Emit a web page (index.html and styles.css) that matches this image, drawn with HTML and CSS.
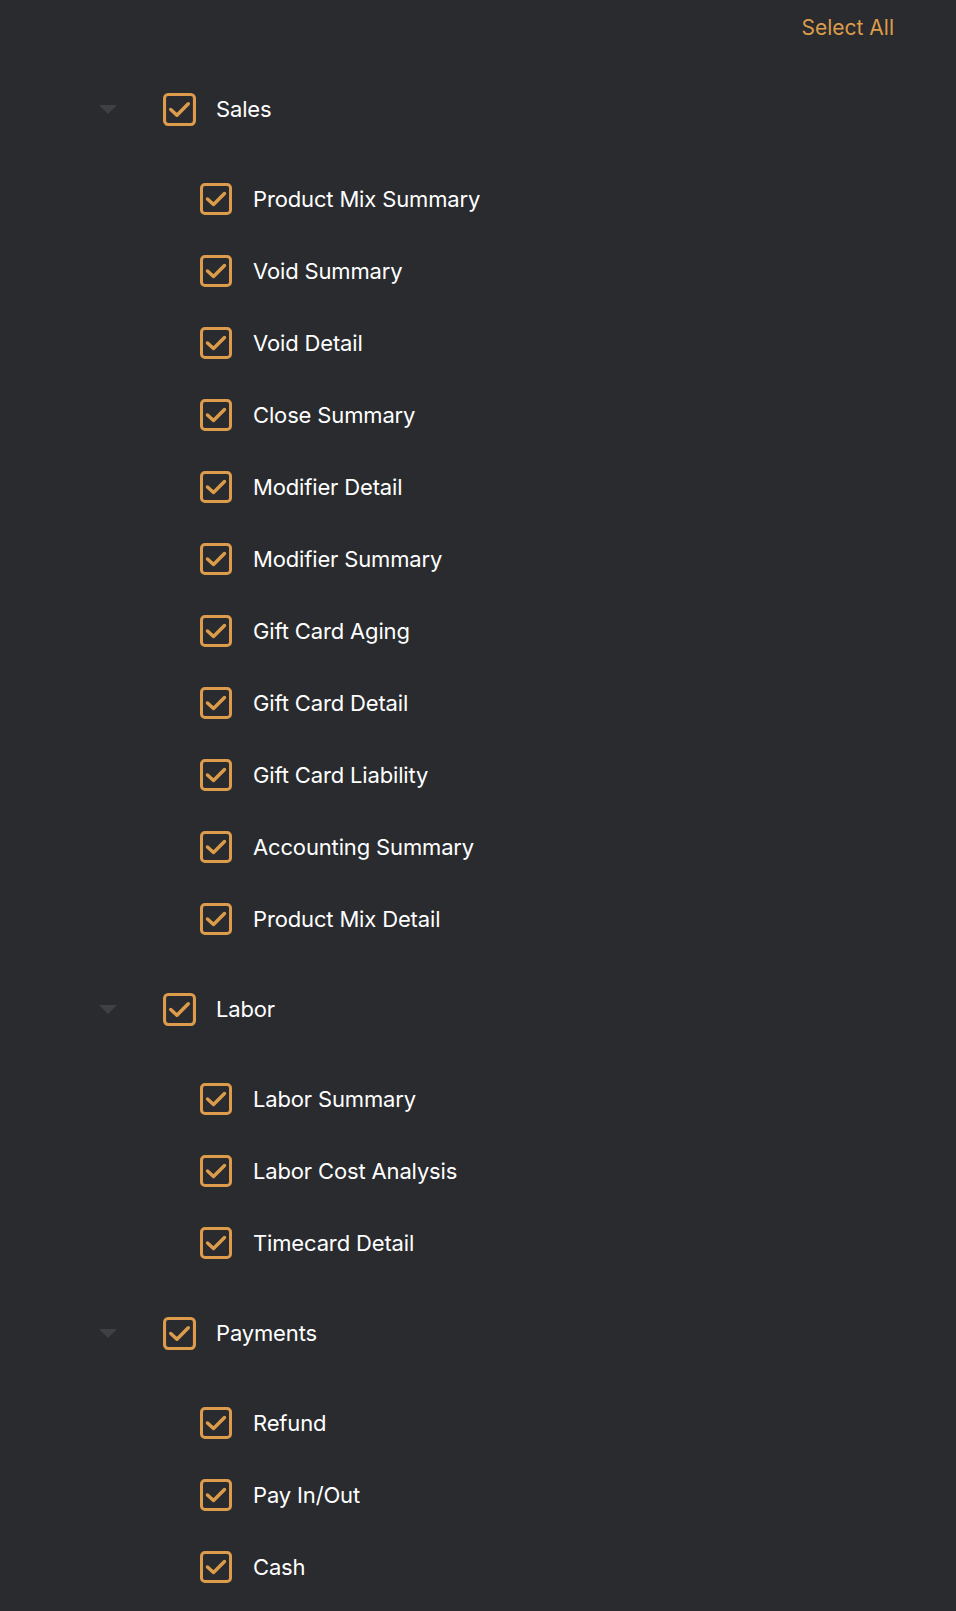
FILE: index.html
```html
<!DOCTYPE html>
<html lang="en">
<head>
    <meta charset="UTF-8">
    <meta name="viewport" content="width=device-width, initial-scale=1.0">
    <title>Reports</title>
    <link rel="stylesheet" href="styles.css">
</head>
<body>
    <div class="page">
        <div class="top-bar">
            <button class="select-all">Select All</button>
        </div>

        <!-- Sales -->
        <div class="group">
            <div class="parent-row">
                <span class="caret"></span>
                <svg class="check" viewBox="0 0 32 32"><rect x="1.5" y="1.5" width="29" height="29" rx="3.5"/><path d="M7.5 16 L13.5 21.5 L24.5 10.5"/></svg>
                <span class="label">Sales</span>
            </div>
            <div class="children">
                <div class="child-row"><svg class="check" viewBox="0 0 32 32"><rect x="1.5" y="1.5" width="29" height="29" rx="3.5"/><path d="M7.5 16 L13.5 21.5 L24.5 10.5"/></svg><span class="label">Product Mix Summary</span></div>
                <div class="child-row"><svg class="check" viewBox="0 0 32 32"><rect x="1.5" y="1.5" width="29" height="29" rx="3.5"/><path d="M7.5 16 L13.5 21.5 L24.5 10.5"/></svg><span class="label">Void Summary</span></div>
                <div class="child-row"><svg class="check" viewBox="0 0 32 32"><rect x="1.5" y="1.5" width="29" height="29" rx="3.5"/><path d="M7.5 16 L13.5 21.5 L24.5 10.5"/></svg><span class="label">Void Detail</span></div>
                <div class="child-row"><svg class="check" viewBox="0 0 32 32"><rect x="1.5" y="1.5" width="29" height="29" rx="3.5"/><path d="M7.5 16 L13.5 21.5 L24.5 10.5"/></svg><span class="label">Close Summary</span></div>
                <div class="child-row"><svg class="check" viewBox="0 0 32 32"><rect x="1.5" y="1.5" width="29" height="29" rx="3.5"/><path d="M7.5 16 L13.5 21.5 L24.5 10.5"/></svg><span class="label">Modifier Detail</span></div>
                <div class="child-row"><svg class="check" viewBox="0 0 32 32"><rect x="1.5" y="1.5" width="29" height="29" rx="3.5"/><path d="M7.5 16 L13.5 21.5 L24.5 10.5"/></svg><span class="label">Modifier Summary</span></div>
                <div class="child-row"><svg class="check" viewBox="0 0 32 32"><rect x="1.5" y="1.5" width="29" height="29" rx="3.5"/><path d="M7.5 16 L13.5 21.5 L24.5 10.5"/></svg><span class="label">Gift Card Aging</span></div>
                <div class="child-row"><svg class="check" viewBox="0 0 32 32"><rect x="1.5" y="1.5" width="29" height="29" rx="3.5"/><path d="M7.5 16 L13.5 21.5 L24.5 10.5"/></svg><span class="label">Gift Card Detail</span></div>
                <div class="child-row"><svg class="check" viewBox="0 0 32 32"><rect x="1.5" y="1.5" width="29" height="29" rx="3.5"/><path d="M7.5 16 L13.5 21.5 L24.5 10.5"/></svg><span class="label">Gift Card Liability</span></div>
                <div class="child-row"><svg class="check" viewBox="0 0 32 32"><rect x="1.5" y="1.5" width="29" height="29" rx="3.5"/><path d="M7.5 16 L13.5 21.5 L24.5 10.5"/></svg><span class="label">Accounting Summary</span></div>
                <div class="child-row"><svg class="check" viewBox="0 0 32 32"><rect x="1.5" y="1.5" width="29" height="29" rx="3.5"/><path d="M7.5 16 L13.5 21.5 L24.5 10.5"/></svg><span class="label">Product Mix Detail</span></div>
            </div>
        </div>

        <!-- Labor -->
        <div class="group">
            <div class="parent-row">
                <span class="caret"></span>
                <svg class="check" viewBox="0 0 32 32"><rect x="1.5" y="1.5" width="29" height="29" rx="3.5"/><path d="M7.5 16 L13.5 21.5 L24.5 10.5"/></svg>
                <span class="label">Labor</span>
            </div>
            <div class="children">
                <div class="child-row"><svg class="check" viewBox="0 0 32 32"><rect x="1.5" y="1.5" width="29" height="29" rx="3.5"/><path d="M7.5 16 L13.5 21.5 L24.5 10.5"/></svg><span class="label">Labor Summary</span></div>
                <div class="child-row"><svg class="check" viewBox="0 0 32 32"><rect x="1.5" y="1.5" width="29" height="29" rx="3.5"/><path d="M7.5 16 L13.5 21.5 L24.5 10.5"/></svg><span class="label">Labor Cost Analysis</span></div>
                <div class="child-row"><svg class="check" viewBox="0 0 32 32"><rect x="1.5" y="1.5" width="29" height="29" rx="3.5"/><path d="M7.5 16 L13.5 21.5 L24.5 10.5"/></svg><span class="label">Timecard Detail</span></div>
            </div>
        </div>

        <!-- Payments -->
        <div class="group">
            <div class="parent-row">
                <span class="caret"></span>
                <svg class="check" viewBox="0 0 32 32"><rect x="1.5" y="1.5" width="29" height="29" rx="3.5"/><path d="M7.5 16 L13.5 21.5 L24.5 10.5"/></svg>
                <span class="label">Payments</span>
            </div>
            <div class="children">
                <div class="child-row"><svg class="check" viewBox="0 0 32 32"><rect x="1.5" y="1.5" width="29" height="29" rx="3.5"/><path d="M7.5 16 L13.5 21.5 L24.5 10.5"/></svg><span class="label">Refund</span></div>
                <div class="child-row"><svg class="check" viewBox="0 0 32 32"><rect x="1.5" y="1.5" width="29" height="29" rx="3.5"/><path d="M7.5 16 L13.5 21.5 L24.5 10.5"/></svg><span class="label">Pay In/Out</span></div>
                <div class="child-row"><svg class="check" viewBox="0 0 32 32"><rect x="1.5" y="1.5" width="29" height="29" rx="3.5"/><path d="M7.5 16 L13.5 21.5 L24.5 10.5"/></svg><span class="label">Cash</span></div>
            </div>
        </div>
    </div>
</body>
</html>
```

FILE: styles.css
```css
body {
    background-color: #292b2f;
    color: #FFFFFF;
    font-family: Inter, "Noto Sans", sans-serif;
    margin: 0;
}
.page {
    width: 100%;
}
.top-bar {
    display: flex;
    justify-content: flex-end;
    align-items: center;
    height: 54px;
    padding-right: 62px;
    margin-bottom: 19px;
}
.select-all {
    background: none;
    border: none;
    padding: 0;
    color: #dc9c4b;
    font-family: inherit;
    font-size: 21px;
    cursor: pointer;
}
.parent-row {
    display: flex;
    align-items: center;
    height: 72px;
    padding-left: 99px;
}
.caret {
    width: 0;
    height: 0;
    border-left: 9px solid transparent;
    border-right: 9px solid transparent;
    border-top: 9px solid #3e4045;
    margin-right: 46px;
}
.children {
    padding: 18px 0;
}
.child-row {
    display: flex;
    align-items: center;
    height: 72px;
    padding-left: 200px;
}
.check {
    width: 33px;
    height: 33px;
    flex-shrink: 0;
    fill: none;
    stroke: #dc9c4b;
    stroke-width: 3;
    stroke-linecap: round;
    stroke-linejoin: round;
}
.check path {
    stroke-width: 3.4;
}
.child-row .check {
    width: 32px;
    height: 32px;
}
.label {
    margin-left: 20px;
    font-size: 22px;
    letter-spacing: -0.15px;
}
.child-row .label {
    margin-left: 21px;
}
```
